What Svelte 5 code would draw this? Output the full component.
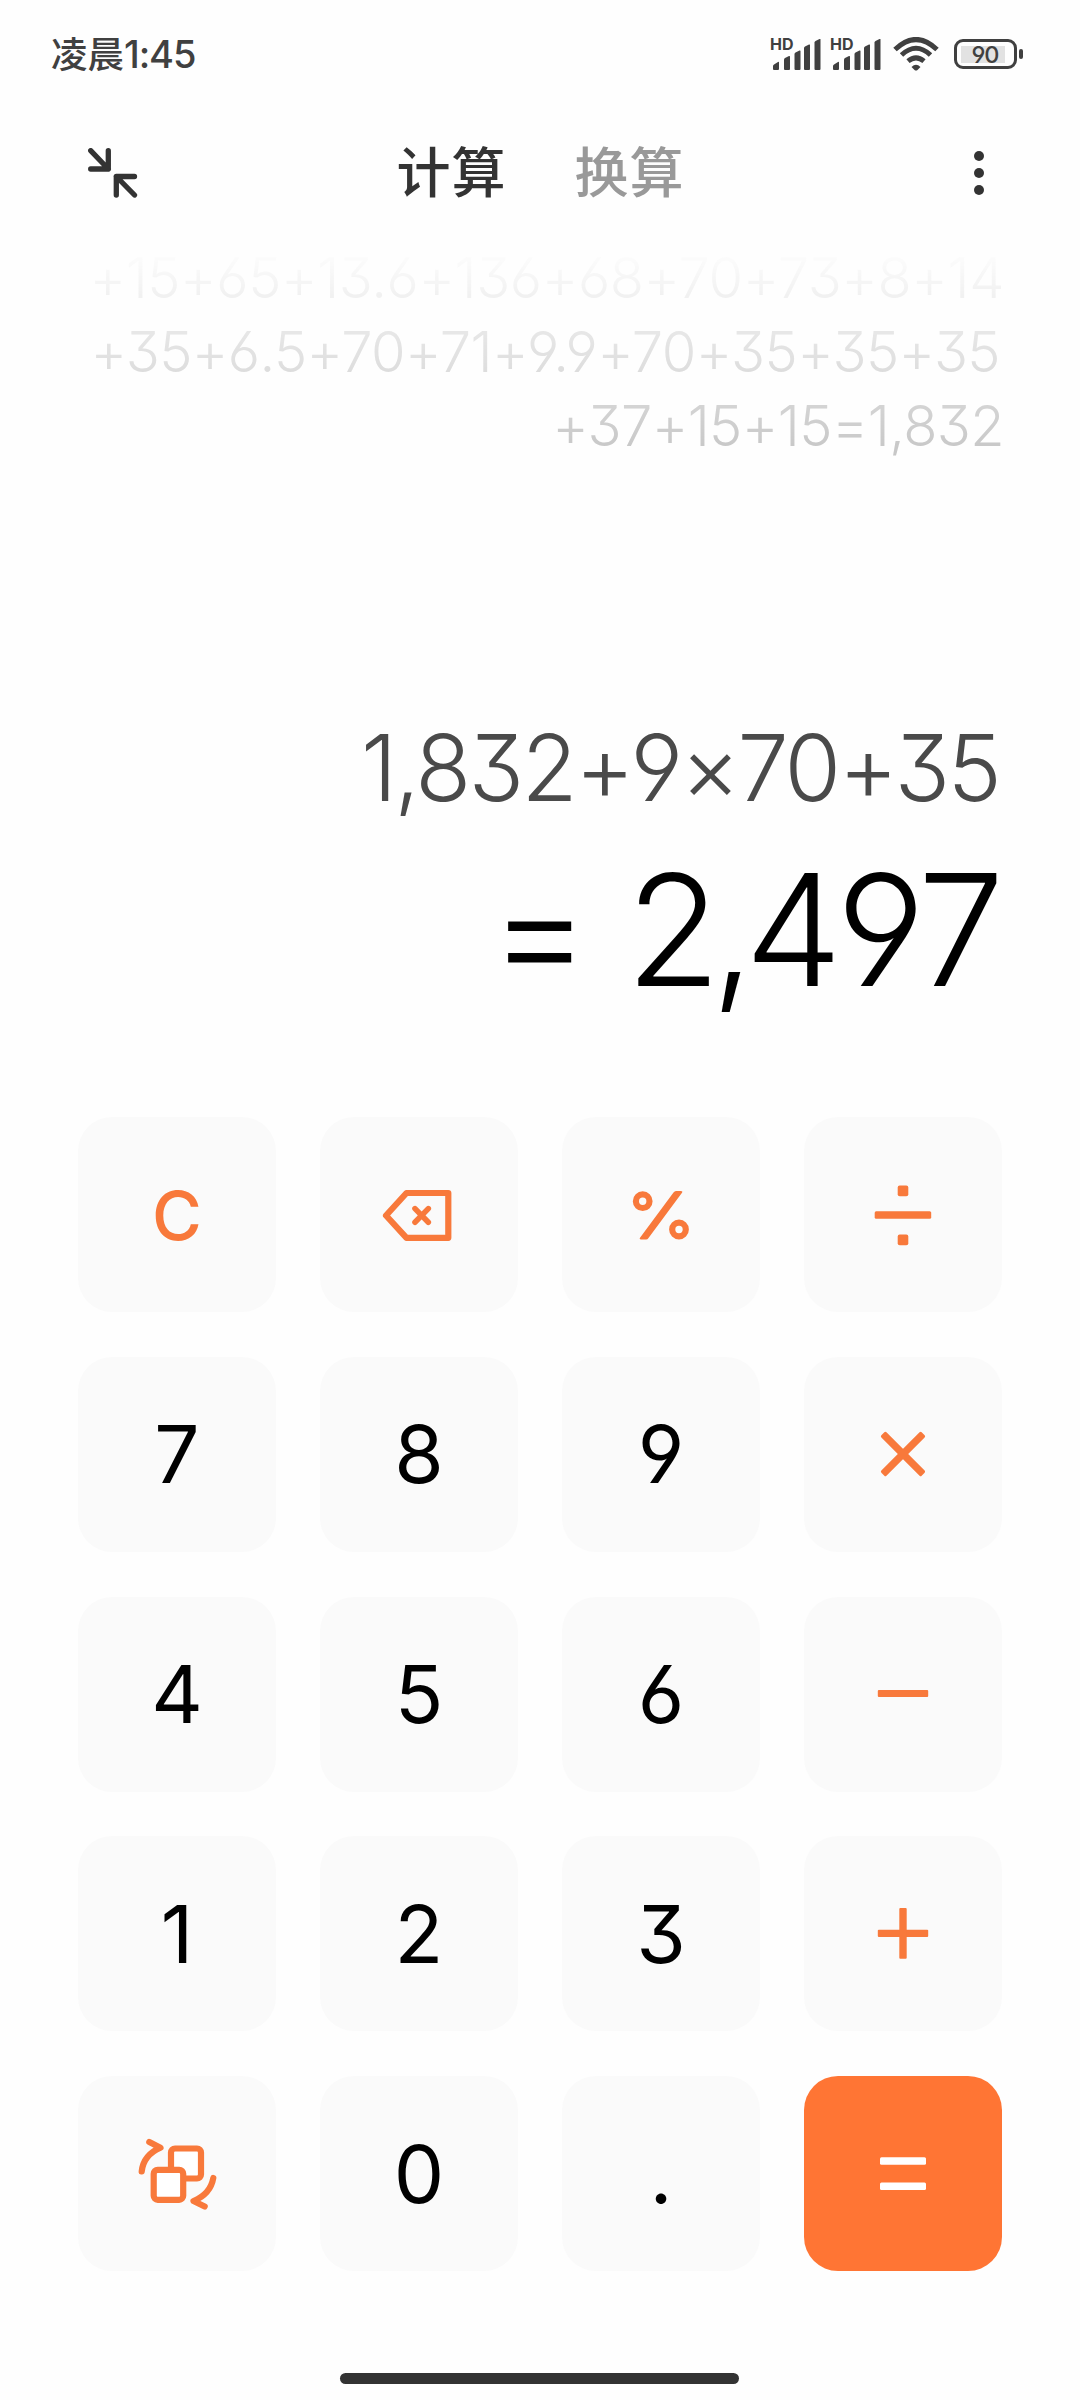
<script>
  const history = [
    { text: "+15+65+13.6+136+68+70+73+8+14", cls: "first" },
    { text: "+35+6.5+70+71+9.9+70+35+35+35", cls: "second" },
    { text: "+37+15+15=1,832", cls: "third" },
  ];

  const keys = [
    "C", "back", "percent", "divide",
    "7", "8", "9", "times",
    "4", "5", "6", "minus",
    "1", "2", "3", "plus",
    "swap", "0", ".", "equals",
  ];

  const icons = ["back", "percent", "divide", "times", "minus", "plus", "swap", "equals"];

  let expression = "1,832+9×70+35";
  let result = 2497;

  // thousands are split so the comma can be tightened
  const groups = result.toLocaleString("en-US").split(",");
</script>

<div class="phone">
  <div class="status">
    <span class="time">凌晨<b>1:45</b></span>
    <div class="indicators">
      {#each [1, 2] as sim}
        <div class="sim">
          <span class="hd">HD</span>
          <svg width="50" height="34" viewBox="0 0 50 34">
            <path d="M2 32v-3q0-1 1-1.500l4-2.500q1-.5 1 .5v6.500q0 1-1 1h-4q-1 0-1-1z" />
            <path d="M13 32v-9.500q0-1 1-1.500l4-2q1-.4 1 .6v12.400q0 1-1 1h-4q-1 0-1-1z" />
            <path d="M23.500 32v-15q0-1 1-1.500l4-2q1-.4 1 .6v17.900q0 1-1 1h-4q-1 0-1-1z" />
            <path d="M33 32v-21q0-1 1-1.500l4-2q1-.4 1 .6v23.900q0 1-1 1h-4q-1 0-1-1z" />
            <path d="M43.500 32v-26.500q0-1 1-1.500l4-2q1-.4 1 .6v29.400q0 1-1 1h-4q-1 0-1-1z" />
          </svg>
        </div>
      {/each}
      <svg class="wifi" width="46" height="34" viewBox="0 0 46 34">
        <path d="M2 12.500Q23-7.500 44 12.500" />
        <path d="M8.500 18Q23 4.500 37.500 18" />
        <path d="M15 24.200Q23 17.500 31 24.200" />
        <path class="dot" d="M18.500 30q4.500-4.500 9 0l-3 3q-1.500 1.200-3 0z" />
      </svg>
      <div class="battery">
        <div class="cell"><span>90</span></div>
        <div class="nub"></div>
      </div>
    </div>
  </div>

  <div class="header">
    <svg class="shrink" width="50" height="50" viewBox="0 0 50 50">
      <path d="M2.700 2.700L20.300 21M20.300 2.700V21H2.700" />
      <path d="M46.500 47L28.300 28.500M46.500 28.500H28.300V47" />
    </svg>
    <div class="tabs">
      <span class="tab active">计算</span>
      <span class="tab">换算</span>
    </div>
    <svg class="more" width="10" height="46" viewBox="0 0 10 46">
      <circle cx="5" cy="6" r="5" />
      <circle cx="5" cy="23" r="5" />
      <circle cx="5" cy="40" r="5" />
    </svg>
  </div>

  <div class="display">
    <div class="history">
      {#each history as line}
        <div class={line.cls}>{line.text}</div>
      {/each}
    </div>
    <div class="expression">{expression}</div>
    <div class="result">= <span class="thousands">{groups[0]},</span>{groups[1]}</div>
  </div>

  <div class="keypad">
    {#each keys as key}
      <div class="key" class:equals={key === "equals"} class:clear={key === "C"}>
        {#if icons.includes(key)}
          <svg width="90" height="90" viewBox="-45 -45 90 90">
            {#if key === "back"}
              <path class="line" d="M-12.500-22H29.300V22.800H-12.500L-33 .5z" />
              <path class="line thin" d="M-4-6.400L9.300 7.200M9.300-6.400L-4 7.200" />
            {:else if key === "percent"}
              <circle class="line" cx="-18.300" cy="-13.800" r="6.800" />
              <circle class="line" cx="18" cy="14.500" r="6.800" />
              <path d="M15-24H20q2 0 1 1.700L-12.500 23q-1 1.500-2.500 1.500h-5q-2 0-1-1.700L12.500-22.500q1-1.500 2.500-1.500z" />
            {:else if key === "divide"}
              <rect x="-28.300" y="-3.800" width="56.500" height="7.600" rx="1.500" />
              <rect x="-5.300" y="-29.500" width="10.600" height="10.800" rx="2" />
              <rect x="-5.300" y="19.500" width="10.600" height="10.800" rx="2" />
            {:else if key === "times"}
              <g transform="rotate(45)">
                <rect x="-28.500" y="-3.600" width="57" height="7.200" rx="1.500" />
                <rect x="-3.600" y="-28.500" width="7.200" height="57" rx="1.500" />
              </g>
            {:else if key === "minus"}
              <rect x="-25.200" y="-4.100" width="50.400" height="7.200" rx="1" />
            {:else if key === "plus"}
              <rect x="-25.200" y="-4.300" width="50.400" height="7.400" rx="1" />
              <rect x="-3.700" y="-26" width="7.400" height="50.800" rx="1" />
            {:else if key === "swap"}
              <rect class="line card" x="-6" y="-25.500" width="30" height="30" rx="4" />
              <rect class="line card" x="-23.300" y="-4.200" width="29.500" height="30" rx="4" />
              <path class="line" d="M-35.300-2.500Q-33.500-19-16.500-26.300L-27.700-32" />
              <path class="line" d="M36.300 4Q33.500 20 16.500 27L27.700 32.500" />
            {:else}
              <rect x="-23" y="-16.700" width="46" height="7.400" rx="1.500" />
              <rect x="-23" y="8.500" width="46" height="7.400" rx="1.500" />
            {/if}
          </svg>
        {:else}
          {key}
        {/if}
      </div>
    {/each}
  </div>

  <div class="homebar"></div>
</div>

<style>
  :global(body) {
    background: #fefefe;
  }

  .phone {
    width: 1080px;
    height: 2400px;
    display: flex;
    flex-direction: column;
    overflow: hidden;
    background: #fefefe;
    font-family: "Inter", "Noto Sans CJK SC", sans-serif;
    font-feature-settings: "cv03", "cv04", "cv09";
  }

  .status {
    height: 108px;
    box-sizing: border-box;
    padding: 0 57px 0 51px;
    display: flex;
    align-items: center;
    justify-content: space-between;
    color: #404040;
  }
  .time {
    font-size: 36.500px;
    font-weight: 500;
    line-height: 40px;
  }
  .time b {
    font-weight: 500;
    font-size: 38px;
    letter-spacing: -1.100px;
  }
  .indicators {
    display: flex;
    align-items: center;
  }
  .sim {
    position: relative;
    margin-right: 10px;
  }
  .sim svg,
  .wifi {
    display: block;
    fill: #404040;
  }
  .hd {
    position: absolute;
    left: -1px;
    top: -1px;
    font-size: 16px;
    line-height: 16px;
    font-weight: 700;
  }
  .wifi {
    margin-left: 2px;
    margin-right: 15px;
  }
  .wifi path {
    fill: none;
    stroke: #404040;
    stroke-width: 5;
  }
  .wifi .dot {
    fill: #404040;
    stroke: none;
  }
  .battery {
    display: flex;
    align-items: center;
    gap: 2px;
  }
  .cell {
    width: 63px;
    height: 30px;
    box-sizing: border-box;
    border: 3.500px solid #404040;
    border-radius: 9px;
    display: flex;
    align-items: center;
    justify-content: center;
    font-size: 23.500px;
    font-weight: 500;
    background: linear-gradient(#e2e2e2, #e2e2e2) 4px center / 44px 17px no-repeat;
  }
  .cell span {
    padding-right: 1px;
    letter-spacing: -1px;
  }
  .nub {
    width: 4px;
    height: 10px;
    border-radius: 2px;
    background: #404040;
  }

  .header {
    height: 128px;
    box-sizing: border-box;
    padding: 1px 96px 0 88px;
    display: flex;
    align-items: center;
    justify-content: space-between;
  }
  .shrink {
    fill: none;
    stroke: #333;
    stroke-width: 5.300;
    stroke-linecap: round;
    stroke-linejoin: round;
  }
  .more {
    fill: #333;
  }
  .tabs {
    display: flex;
    gap: 68px;
    padding: 3px 31px 0 0;
  }
  .tab {
    font-size: 54px;
    letter-spacing: 1px;
    line-height: 60px;
    font-weight: 500;
    color: #999;
  }
  .active {
    color: #333;
  }

  .display {
    height: 881px;
    box-sizing: border-box;
    padding: 5px 76px 0 0;
    text-align: right;
    white-space: nowrap;
  }
  .history {
    font-size: 56px;
    line-height: 74px;
    font-weight: 300;
    color: #c6c6c6;
    mask-image: linear-gradient(transparent 8px, #000 215px);
  }
  .first {
    letter-spacing: -0.400px;
  }
  .second {
    padding-right: 4px;
    letter-spacing: -0.600px;
  }
  .third {
    letter-spacing: -0.600px;
  }
  .expression {
    margin-top: 240px;
    padding-right: 5px;
    font-size: 91.500px;
    line-height: 130px;
    font-weight: 300;
    letter-spacing: -2.700px;
    color: #4a4a4a;
  }
  .result {
    margin-top: -3px;
    padding-right: 1px;
    font-size: 155px;
    line-height: 200px;
    font-weight: 300;
    letter-spacing: -1.500px;
    word-spacing: -5px;
    color: #000;
  }
  .thousands {
    letter-spacing: -10px;
  }

  .keypad {
    display: grid;
    grid-template-columns: repeat(4, 198px);
    grid-auto-rows: 195px;
    gap: 44.750px 44px;
    padding-left: 78px;
  }
  .key {
    display: flex;
    align-items: center;
    justify-content: center;
    border-radius: 34px;
    background: #fafafa;
    font-size: 80px;
    line-height: 100px;
    font-weight: 400;
    color: #000;
  }
  .key svg {
    fill: #f8793b;
    overflow: visible;
  }
  .key .line {
    fill: none;
    stroke: #f8793b;
    stroke-width: 6.200;
    stroke-linecap: round;
    stroke-linejoin: round;
  }
  .key .thin {
    stroke-width: 5.600;
  }
  .key .card {
    fill: #fff;
  }
  .clear {
    font-size: 68px;
    font-weight: 500;
    color: #f8793b;
  }
  .equals {
    background: #ff7534;
  }
  .equals svg {
    fill: #fff;
  }

  .homebar {
    width: 399px;
    height: 11px;
    margin: 102px 0 0 340px;
    border-radius: 6px;
    background: #333;
  }
</style>
